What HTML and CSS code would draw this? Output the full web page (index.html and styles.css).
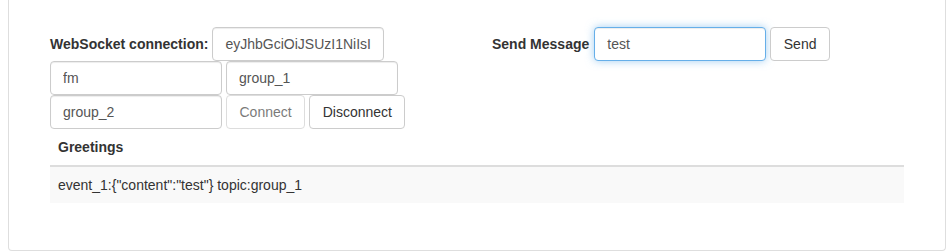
FILE: index.html
```html
<!DOCTYPE html>
<html>
<head>
<meta charset="utf-8">
<link rel="stylesheet" href="styles.css">
</head>
<body>
<div class="panel">
  <div class="cols">
    <div class="col">
      <div class="line">
        <label class="lbl">WebSocket connection:</label>
        <input class="field" type="text" value="eyJhbGciOiJSUzI1NiIsInR5cCI6IkpXVCJ9">
      </div>
      <div class="line">
        <input class="field" type="text" value="fm">
        <input class="field" type="text" value="group_1">
      </div>
      <div class="line">
        <input class="field" type="text" value="group_2">
        <button class="btn" disabled>Connect</button>
        <button class="btn">Disconnect</button>
      </div>
    </div>
    <div class="col">
      <div class="line">
        <label class="lbl lbl-send">Send Message</label>
        <input class="field focus" type="text" value="test">
        <button class="btn">Send</button>
      </div>
    </div>
  </div>
  <table class="table">
    <thead>
      <tr><th>Greetings</th></tr>
    </thead>
    <tbody>
      <tr><td>event_1:{"content":"test"} topic:group_1</td></tr>
    </tbody>
  </table>
</div>
</body>
</html>
```
FILE: styles.css
```css
html, body {
  margin: 0;
  padding: 0;
  background: #fff;
}
body {
  font-family: "Liberation Sans", Arial, sans-serif;
  font-size: 14px;
  line-height: 20px;
  color: #333;
}
.panel {
  box-sizing: border-box;
  width: 938px;
  margin-left: 8px;
  padding: 27px 41px 47px 41px;
  border: 1px solid #dedede;
  border-top: 0;
  border-radius: 0 0 4px 4px;
}
.cols {
  display: grid;
  grid-template-columns: 412px 412px;
  column-gap: 30px;
}
.line {
  display: flex;
  align-items: center;
  gap: 4px;
  height: 34px;
}
.lbl {
  font-weight: bold;
  white-space: nowrap;
}
.lbl-send {
  margin-right: 1px;
}
.field {
  box-sizing: border-box;
  width: 172px;
  height: 34px;
  padding: 6px 12px;
  font-family: inherit;
  font-size: 14px;
  line-height: 20px;
  color: #555;
  background: #fff;
  border: 1px solid #ccc;
  border-radius: 4px;
  box-shadow: inset 0 1px 1px rgba(0,0,0,.075);
  outline: none;
  margin: 0;
}
.field.focus {
  border-color: #66afe9;
  box-shadow: inset 0 1px 1px rgba(0,0,0,.075), 0 0 8px rgba(102,175,233,.6);
}
.btn {
  box-sizing: border-box;
  height: 34px;
  padding: 6px 12px;
  font-family: inherit;
  font-size: 14px;
  line-height: 20px;
  color: #333;
  background: #fff;
  border: 1px solid #ccc;
  border-radius: 4px;
  margin: 0;
  white-space: nowrap;
}
.field + .btn,
.btn + .btn {
  padding: 6px 12.5px;
}
.btn:disabled {
  opacity: .65;
}
.table {
  width: 100%;
  border-collapse: collapse;
  border-spacing: 0;
}
.table th, .table td {
  text-align: left;
  padding: 8px;
  line-height: 20px;
  vertical-align: bottom;
}
.table th {
  font-weight: bold;
  border-bottom: 2px solid #ddd;
}
.table td {
  background: #f9f9f9;
  vertical-align: top;
}
```
